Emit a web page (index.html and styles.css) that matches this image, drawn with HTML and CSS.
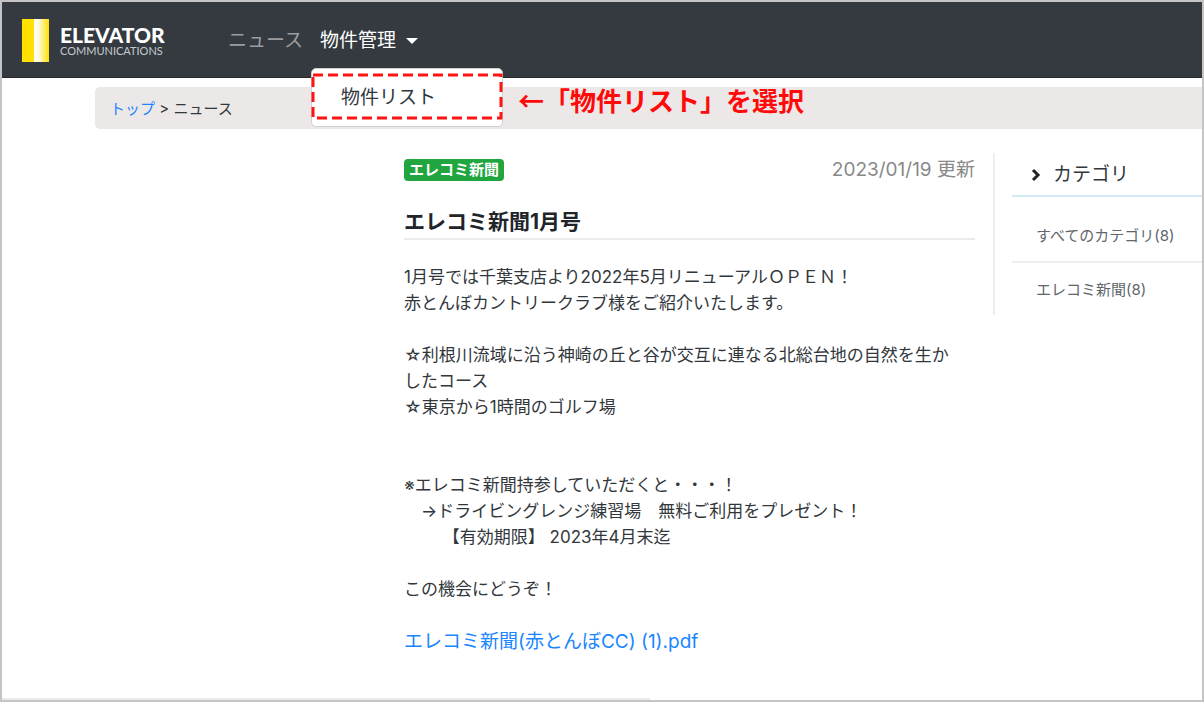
FILE: index.html
```html
<!DOCTYPE html>
<html lang="ja">
<head>
<meta charset="utf-8">
<meta name="viewport" content="width=device-width, initial-scale=1">
<title>エレコミ新聞1月号</title>
<link rel="stylesheet" href="styles.css">
</head>
<body>
<div class="frame">
  <header class="navbar">
    <a class="brand" href="#">
      <svg class="brand-mark" viewBox="0 0 27 43" aria-hidden="true">
        <defs>
          <linearGradient id="door" x1="0" x2="1" y1="0" y2="0">
            <stop offset="0" stop-color="#fff"/>
            <stop offset="0.3" stop-color="#fffbe0"/>
            <stop offset="1" stop-color="#ffe000"/>
          </linearGradient>
        </defs>
        <rect width="12" height="43" fill="#ffe000"/>
        <rect x="12" width="15" height="43" fill="url(#door)"/>
      </svg>
      <span class="brand-name"><span class="brand-main">ELEVATOR</span><span class="brand-sub">COMMUNICATIONS</span></span>
    </a>
    <nav class="menu">
      <a class="menu-link" href="#">ニュース</a>
      <div class="dropdown">
        <button class="menu-toggle" type="button" aria-expanded="true">物件管理<span class="caret"></span></button>
        <div class="dropdown-panel">
          <a class="dropdown-item" href="#">物件リスト</a>
          <svg class="highlight" aria-hidden="true"><rect x="0" y="0" width="100%" height="100%"/></svg>
        </div>
        <strong class="callout">←「物件リスト」を選択</strong>
      </div>
    </nav>
  </header>

  <nav class="breadcrumb" aria-label="パンくず"><a href="#">トップ</a> &gt; ニュース</nav>

  <div class="content">
    <main class="article">
      <div class="meta"><span class="badge">エレコミ新聞</span><time class="date" datetime="2023-01-19">2023/01/19 更新</time></div>
      <h1 class="title">エレコミ新聞1月号</h1>
      <div class="text">1月号では千葉支店より2022年5月リニューアルＯＰＥＮ！
赤とんぼカントリークラブ様をご紹介いたします。

☆利根川流域に沿う神崎の丘と谷が交互に連なる北総台地の自然を生か
したコース
☆東京から1時間のゴルフ場


※エレコミ新聞持参していただくと・・・！
　→ドライビングレンジ練習場　無料ご利用をプレゼント！
　　 【有効期限】 2023年4月末迄

この機会にどうぞ！
</div>
      <a class="file" href="#">エレコミ新聞(赤とんぼCC) (1).pdf</a>
    </main>
    <aside class="sidebar">
      <h2 class="side-title"><svg class="chevron" viewBox="0 0 10 14" aria-hidden="true"><path d="M2 2l5 5-5 5"/></svg>カテゴリ</h2>
      <ul class="side-list">
        <li><a href="#">すべてのカテゴリ(8)</a></li>
        <li><a href="#">エレコミ新聞(8)</a></li>
      </ul>
    </aside>
  </div>
  <div class="bottom-rule"></div>
</div>
</body>
</html>
```
FILE: styles.css
```css
* { box-sizing: border-box; }

body {
  margin: 0;
  background: #fff;
  color: #32373c;
  font-family: Inter, "Noto Sans CJK JP", sans-serif;
  font-size: 17px;
  line-height: 26px;
}

a { color: #1a86ff; text-decoration: none; }

.frame {
  display: flex;
  flex-direction: column;
  min-height: 100vh;
  border: 2px solid #c4c4c4;
}

.navbar {
  display: flex;
  align-items: stretch;
  height: 76px;
  padding: 2px 0 0 20px;
  background: #343a40;
  border-bottom: 1px solid #24292d;
}

.brand {
  display: flex;
  align-items: center;
  gap: 11px;
  width: 206px;
  color: #fff;
  font-family: Lato, sans-serif;
}

.brand-mark { width: 27px; height: 43px; }
.brand-name { display: flex; flex-direction: column; }
.brand-main { font-size: 21px; font-weight: 900; line-height: 21px; }
.brand-sub { font-size: 11px; line-height: 12px; color: #c4c9ce; }

.menu { display: flex; align-items: center; gap: 17px; font-size: 19px; }
.menu-link { color: #9a9da0; }

.dropdown { position: relative; }

.menu-toggle {
  display: flex;
  align-items: center;
  gap: 10px;
  padding: 0;
  border: 0;
  background: none;
  color: #fff;
  font: inherit;
}

.caret {
  border: 6px solid transparent;
  border-top-color: #fff;
  border-bottom: 0;
}

.dropdown-panel {
  position: absolute;
  top: 40px;
  left: -9px;
  width: 192px;
  padding: 5px 1px 4px;
  background: #fff;
  border: 1px solid #d0d0d0;
  border-radius: 5px;
}

.dropdown-item {
  display: block;
  padding: 11px 28px;
  color: #32373c;
  white-space: nowrap;
}

.highlight {
  position: absolute;
  top: 6px;
  left: 1px;
  width: 188px;
  height: 43px;
  overflow: visible;
}

.highlight rect {
  fill: none;
  stroke: #ff1414;
  stroke-width: 3;
  stroke-dasharray: 10 5;
}

.callout {
  position: absolute;
  top: 59px;
  left: 198px;
  color: #ff0a0a;
  font-family: "Noto Sans CJK JP", sans-serif;
  font-size: 26px;
  white-space: nowrap;
}

.breadcrumb {
  margin: 9px 0 0 93px;
  padding: 9px 15px 7px;
  background: #ece8e7;
  border-radius: 5px 0 0 5px;
  font-size: 15px;
}

.content {
  display: flex;
  align-items: flex-start;
  gap: 18px;
  margin-top: 24px;
  padding-left: 402px;
}

.article { flex: 1; padding-top: 4px; }

.meta { display: flex; justify-content: space-between; align-items: center; }

.badge {
  padding: 0 5px;
  border-radius: 4px;
  background: #21a63f;
  color: #fff;
  font-size: 15px;
  font-weight: 700;
  line-height: 22px;
}

.date { color: #888; font-size: 19px; }

.title {
  margin: 25px 0 24px;
  padding-bottom: 2px;
  border-bottom: 2px solid #eeeaea;
  color: #212529;
  font-size: 21px;
  font-weight: 700;
  line-height: 28px;
}

.text { white-space: pre-wrap; }
.file { display: inline-block; margin-top: 27px; font-size: 19px; }

.sidebar {
  width: 209px;
  padding-left: 17px;
  border-left: 2px solid #eee;
}

.side-title {
  display: flex;
  align-items: center;
  gap: 12px;
  margin: 0;
  padding: 9px 0 7px 19px;
  border-bottom: 2px solid #d3ebf5;
  font-size: 19px;
  font-weight: 400;
}

.chevron { width: 10px; height: 14px; }
.chevron path { fill: none; stroke: #212529; stroke-width: 3; }

.side-list { margin: 0; padding: 0; list-style: none; font-size: 15px; }
.side-list li { padding: 14px 0 12px 24px; }
.side-list li:first-child { padding-top: 26px; border-bottom: 2px solid #eee; }
.side-list a { color: #60666c; }

.bottom-rule {
  width: 54%;
  height: 2px;
  margin-top: auto;
  background: #eaeaea;
}
```
